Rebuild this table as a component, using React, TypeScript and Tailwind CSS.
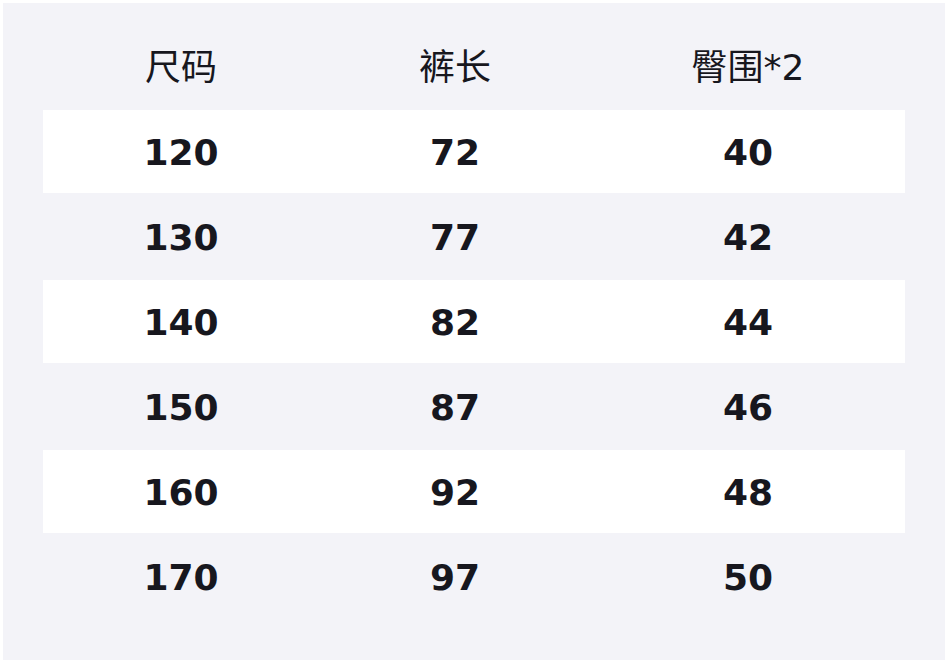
const rows = [
  ["120", "72", "40"],
  ["130", "77", "42"],
  ["140", "82", "44"],
  ["150", "87", "46"],
  ["160", "92", "48"],
  ["170", "97", "50"],
];

export default function App() {
  return (
    <div className="w-[948px] h-[663px] bg-white p-[3px]" style={{ fontFamily: '"DejaVu Sans", "Noto Sans CJK SC", sans-serif' }}>
      <div className="w-[942px] h-[657px] bg-[#f3f3f8] px-[40px] pt-[22px] text-[#17171e]">
        <div className="flex flex-col gap-[2px]">
          <div className="grid grid-cols-[276px_272px_314px] h-[83px] items-center text-center text-[36px] pt-[2px]">
            <div>尺码</div>
            <div>裤长</div>
            <div>臀围*2</div>
          </div>
          {rows.map((r, i) => (
            <div
              key={r[0]}
              className={`grid grid-cols-[276px_272px_314px] h-[83px] items-center text-center text-[36px] font-bold pt-[2px] ${i % 2 === 0 ? "bg-white" : ""}`}
            >
              <div>{r[0]}</div>
              <div>{r[1]}</div>
              <div>{r[2]}</div>
            </div>
          ))}
        </div>
      </div>
    </div>
  );
}
